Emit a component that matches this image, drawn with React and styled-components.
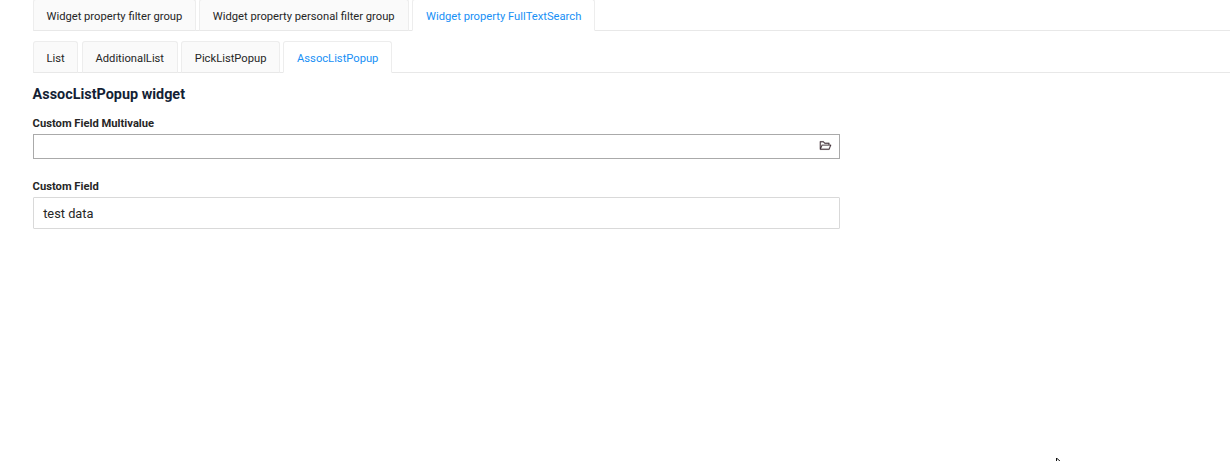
import React from 'react';
import styled, { createGlobalStyle } from 'styled-components';
import { AiOutlineFolderOpen } from 'react-icons/ai';

const GlobalStyle = createGlobalStyle`
  * { box-sizing: border-box; }
  body {
    margin: 0;
    background: #fff;
    color: #141f35;
    font-family: Roboto, sans-serif;
    font-size: 11.2px;
    overflow: hidden;
  }
`;

const Page = styled.main`
  position: relative;
  height: 461px;
  padding-left: 32.6px;
  overflow: hidden;
`;

const TabBar = styled.nav`
  display: flex;
  gap: 3.2px;
  height: 32px;
  margin-top: ${({ $top }) => $top}px;
  border-bottom: 1px solid #e8e8e8;
`;

const Tab = styled.button`
  flex: none;
  width: ${({ $width }) => $width}px;
  height: 32px;
  padding: 3px 0 0 12.9px;
  border: 1px solid #ededed;
  border-bottom-color: ${({ $active }) => ($active ? '#fff' : '#e8e8e8')};
  border-radius: 3px 3px 0 0;
  background: ${({ $active }) => ($active ? '#fff' : '#fafafa')};
  color: ${({ $active }) => ($active ? '#1890f5' : '#262626')};
  font: 400 11.2px/27px Roboto, sans-serif;
  text-align: left;
  white-space: nowrap;
`;

const Title = styled.h1`
  margin: 12px 0 0;
  font-size: 14.4px;
  font-weight: 700;
  line-height: 20px;
`;

const Field = styled.div`
  width: 807px;
  margin-top: ${({ $top }) => $top}px;
`;

const Label = styled.label`
  display: block;
  height: 17px;
  color: #262626;
  font-weight: 700;
  line-height: 14px;
`;

const PopupInput = styled.div`
  display: flex;
  align-items: center;
  justify-content: flex-end;
  height: 25px;
  padding: 0 7px 2px 0;
  border: 1px solid #aaa;
  color: #44343c;
`;

const FolderIcon = styled(AiOutlineFolderOpen)`
  width: 13px;
  height: 13px;
  stroke-width: 14px;
`;

const ReadonlyInput = styled.div`
  height: 32px;
  padding-left: 9.6px;
  border: 1px solid #d9d9d9;
  border-radius: 1px;
  color: #262626;
  font-size: 12.8px;
  line-height: 31px;
`;

const Pointer = styled.svg`
  position: absolute;
  left: 1056px;
  top: 458px;
`;

const groupTabs = [
  { label: 'Widget property filter group', width: 163.2 },
  { label: 'Widget property personal filter group', width: 210 },
  { label: 'Widget property FullTextSearch', width: 182.8, active: true },
];

const widgetTabs = [
  { label: 'List', width: 45.8 },
  { label: 'AdditionalList', width: 96.2 },
  { label: 'PickListPopup', width: 99 },
  { label: 'AssocListPopup', width: 108.8, active: true },
];

function Tabs({ items, top }) {
  return (
    <TabBar $top={top}>
      {items.map(({ label, width, active }) => (
        <Tab key={label} $width={width} $active={active}>{label}</Tab>
      ))}
    </TabBar>
  );
}

export default function App() {
  return (
    <>
      <GlobalStyle />
      <Page>
        <Tabs items={groupTabs} top={-1} />
        <Tabs items={widgetTabs} top={10} />
        <Title>AssocListPopup widget</Title>
        <Field $top={12}>
          <Label>Custom Field Multivalue</Label>
          <PopupInput><FolderIcon /></PopupInput>
        </Field>
        <Field $top={21}>
          <Label>Custom Field</Label>
          <ReadonlyInput>test data</ReadonlyInput>
        </Field>
        <Pointer width="10" height="16" viewBox="0 0 10 16">
          <path d="M.5 0v12l3-3 2 5 2-1-2-5h4z" fill="#fff" stroke="#111" />
        </Pointer>
      </Page>
    </>
  );
}
